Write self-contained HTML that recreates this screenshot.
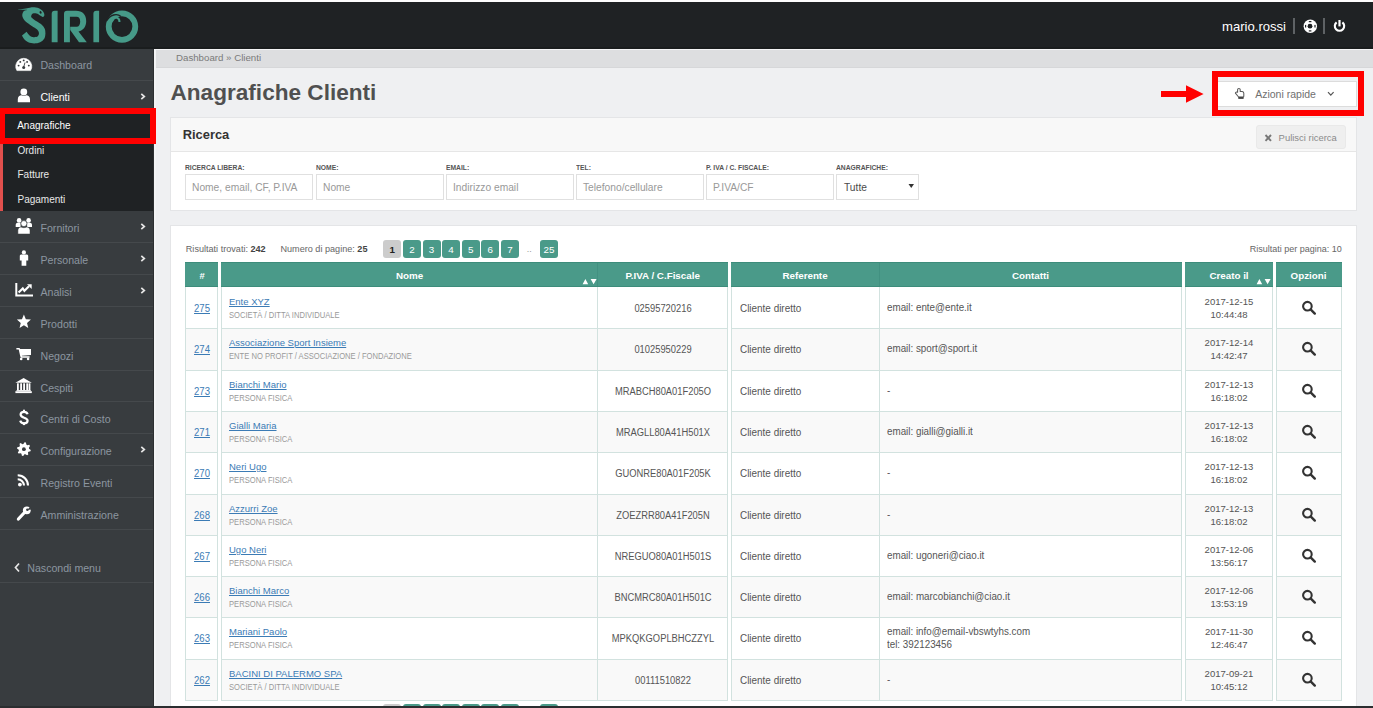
<!DOCTYPE html>
<html><head><meta charset="utf-8"><title>Anagrafiche Clienti</title>
<style>
html,body{margin:0;padding:0;}
body{width:1373px;height:708px;overflow:hidden;position:relative;background:#eff0f2;font-family:"Liberation Sans", sans-serif;}
.t{position:absolute;white-space:nowrap;font-family:"Liberation Sans", sans-serif;}
.r{position:absolute;box-sizing:border-box;}
svg{position:absolute;overflow:visible;}
a{color:inherit;}
u{text-decoration:underline;text-decoration-thickness:1px;text-underline-offset:1px;}
</style></head><body>

<div class="r" style="left:0px;top:0px;width:1373px;height:2px;background:#fdfdfd"></div>
<div class="r" style="left:0px;top:2px;width:1373px;height:47px;background:#1f2224"></div>
<div class="r" style="left:0px;top:47px;width:1373px;height:2px;background:#1a1d1e"></div>
<svg style="left:0;top:0" width="160" height="49" viewBox="0 0 160 49">
<path d="M17.56 9.93 C19.34 9.62 25.67 8.48 28.24 8.04 C30.82 7.59 31.21 7.22 32.99 7.26 C34.77 7.30 37.24 7.58 38.93 8.27 C40.61 8.97 42.17 10.30 43.08 11.42 C43.99 12.54 44.37 14.04 44.39 14.98 C44.41 15.92 43.40 16.71 43.20 17.06 C42.68 16.78 41.22 15.99 40.11 15.39 C39.00 14.80 37.74 13.83 36.55 13.50 C35.36 13.16 33.86 13.06 32.99 13.38 C32.12 13.69 31.53 14.66 31.33 15.39 C31.13 16.13 30.93 16.78 31.80 17.77 C32.67 18.76 34.89 20.16 36.55 21.33 C38.21 22.50 40.39 23.51 41.77 24.77 C43.16 26.04 44.25 27.44 44.86 28.93 C45.47 30.41 45.36 32.88 45.45 33.67 C45.28 34.46 45.28 36.99 44.39 38.42 C43.50 39.86 41.81 41.44 40.11 42.28 C38.41 43.12 36.16 43.47 34.18 43.47 C32.20 43.47 29.92 43.02 28.24 42.28 C26.56 41.54 25.13 40.15 24.09 39.01 C23.05 37.88 22.36 36.05 22.01 35.45 L26.58 31.77 C27.08 32.39 28.38 34.54 29.55 35.45 C30.72 36.36 32.22 37.09 33.58 37.23 C34.95 37.38 36.85 37.04 37.74 36.34 C38.63 35.65 39.02 34.22 38.93 33.08 C38.83 31.94 38.33 30.71 37.15 29.52 C35.96 28.33 33.68 27.24 31.80 25.96 C29.92 24.67 27.35 23.19 25.87 21.80 C24.39 20.42 23.50 18.89 22.90 17.65 C22.31 16.41 22.21 15.42 22.31 14.39 C22.41 13.35 22.75 12.18 23.50 11.42 C24.24 10.66 27.75 10.06 26.76 9.82 C25.77 9.57 19.09 9.91 17.56 9.93 Z" fill="#469a88"/>
<ellipse cx="40.6" cy="12.4" rx="1" ry="1.3" fill="#1f2224" transform="rotate(-30 40.6 12.4)"/>
<path d="M51.7 13.8 Q51.7 10.8 54.7 10.8 L57.6 10.8 L57.6 42.3 L51.7 42.3 Z" fill="#469a88"/>
<path d="M64 13.8 Q64 10.8 67 10.8 L76 10.8 C82.5 10.8 86.2 14.8 86.2 21.2 C86.2 26.8 83 30.5 78.5 31.6 L86.8 42.3 L79 42.3 L70.2 30 L70.2 26.8 L76.5 26.8 C79 26.8 80.2 24.5 80.2 21.5 C80.2 18.5 79 16.7 76.5 16.7 L69.9 16.7 L69.9 42.3 L64 42.3 Z" fill="#469a88"/>
<path d="M93.4 13.8 Q93.4 10.8 96.4 10.8 L99.1 10.8 L99.1 42.3 L93.4 42.3 Z" fill="#469a88"/>
<circle cx="122" cy="26.6" r="13.3" fill="none" stroke="#469a88" stroke-width="5.8"/>
<path d="M106.5 21 C110 14.5 117 13 121 16.5" fill="none" stroke="#1f2224" stroke-width="1.3"/>
<path d="M112 19.5 C115 16.5 119.5 17 119.5 22" fill="none" stroke="#469a88" stroke-width="2"/>
</svg>
<div class="t" style="left:1222.00px;top:19.71px;font-size:13.1px;line-height:13.1px;color:#ffffff;font-weight:400;">mario.rossi</div>
<div class="r" style="left:1293px;top:18px;width:2px;height:16px;background:#5e6265"></div>
<svg style="left:1300px;top:16px" width="20" height="20" viewBox="1300 16 20 20">
<circle cx="1310.3" cy="26.3" r="6.7" fill="#fff"/>
<circle cx="1310" cy="26.2" r="2.4" fill="#1f2224"/>
<g fill="#1f2224"><rect x="1308.8" y="21" width="2.6" height="1.2"/><rect x="1308.8" y="30.3" width="2.6" height="1.2"/><rect x="1305" y="24.9" width="1.2" height="2.6"/><rect x="1314.4" y="24.9" width="1.2" height="2.6"/></g>
</svg>
<div class="r" style="left:1323px;top:18px;width:2px;height:16px;background:#5e6265"></div>
<svg style="left:1330px;top:16px" width="20" height="20" viewBox="1330 16 20 20">
<path d="M1336.6 22.3 A4.7 4.7 0 1 0 1342.4 22.3" fill="none" stroke="#fff" stroke-width="2.1"/>
<line x1="1339.5" y1="20" x2="1339.5" y2="26.4" stroke="#fff" stroke-width="2.2"/>
</svg>
<div class="r" style="left:0px;top:49px;width:153px;height:657px;background:#383c3f"></div>
<div class="r" style="left:153px;top:49px;width:1px;height:657px;background:#2c2f31"></div>
<div class="r" style="left:154px;top:49px;width:2px;height:657px;background:#f3f4f5"></div>
<div class="r" style="left:0px;top:80px;width:153px;height:1px;background:#45494c"></div>
<div class="r" style="left:0px;top:242px;width:153px;height:1px;background:#45494c"></div>
<div class="r" style="left:0px;top:274px;width:153px;height:1px;background:#45494c"></div>
<div class="r" style="left:0px;top:306px;width:153px;height:1px;background:#45494c"></div>
<div class="r" style="left:0px;top:338px;width:153px;height:1px;background:#45494c"></div>
<div class="r" style="left:0px;top:370px;width:153px;height:1px;background:#45494c"></div>
<div class="r" style="left:0px;top:401px;width:153px;height:1px;background:#45494c"></div>
<div class="r" style="left:0px;top:433px;width:153px;height:1px;background:#45494c"></div>
<div class="r" style="left:0px;top:465px;width:153px;height:1px;background:#45494c"></div>
<div class="r" style="left:0px;top:497px;width:153px;height:1px;background:#45494c"></div>
<div class="r" style="left:0px;top:529px;width:153px;height:1px;background:#45494c"></div>
<div class="r" style="left:0px;top:582px;width:153px;height:1px;background:#45494c"></div>
<div class="t" style="left:40.40px;top:59.93px;font-size:10.6px;line-height:10.6px;color:#8c96a0;font-weight:400;">Dashboard</div>
<div class="t" style="left:40.40px;top:91.93px;font-size:10.6px;line-height:10.6px;color:#ffffff;font-weight:400;">Clienti</div>
<div class="r" style="left:0px;top:112px;width:153px;height:99px;background:#1f2224"></div>
<div class="r" style="left:0px;top:112px;width:3px;height:99px;background:#e0504d"></div>
<div class="r" style="left:-1px;top:108px;width:157px;height:36px;border:6px solid #ff0000;background:#1f2224"></div>
<div class="t" style="left:17.20px;top:121.13px;font-size:10.0px;line-height:10.0px;color:#ffffff;font-weight:400;">Anagrafiche</div>
<div class="t" style="left:17.50px;top:145.63px;font-size:10.0px;line-height:10.0px;color:#e8e8e8;font-weight:400;">Ordini</div>
<div class="t" style="left:17.50px;top:170.34px;font-size:10.0px;line-height:10.0px;color:#e8e8e8;font-weight:400;">Fatture</div>
<div class="t" style="left:17.50px;top:194.73px;font-size:10.0px;line-height:10.0px;color:#e8e8e8;font-weight:400;">Pagamenti</div>
<div class="t" style="left:40.50px;top:222.63px;font-size:10.6px;line-height:10.6px;color:#8c96a0;font-weight:400;">Fornitori</div>
<svg style="left:139px;top:223px" width="8" height="9" viewBox="0 0 8 9"><path d="M2.3 0.9 L5.3 3.5 L2.3 6.1" fill="none" stroke="#e6e6e6" stroke-width="1.7"/></svg>
<div class="t" style="left:40.50px;top:254.63px;font-size:10.6px;line-height:10.6px;color:#8c96a0;font-weight:400;">Personale</div>
<svg style="left:139px;top:255px" width="8" height="9" viewBox="0 0 8 9"><path d="M2.3 0.9 L5.3 3.5 L2.3 6.1" fill="none" stroke="#e6e6e6" stroke-width="1.7"/></svg>
<div class="t" style="left:40.50px;top:286.63px;font-size:10.6px;line-height:10.6px;color:#8c96a0;font-weight:400;">Analisi</div>
<svg style="left:139px;top:287px" width="8" height="9" viewBox="0 0 8 9"><path d="M2.3 0.9 L5.3 3.5 L2.3 6.1" fill="none" stroke="#e6e6e6" stroke-width="1.7"/></svg>
<div class="t" style="left:40.50px;top:318.63px;font-size:10.6px;line-height:10.6px;color:#8c96a0;font-weight:400;">Prodotti</div>
<div class="t" style="left:40.50px;top:350.63px;font-size:10.6px;line-height:10.6px;color:#8c96a0;font-weight:400;">Negozi</div>
<div class="t" style="left:40.50px;top:382.63px;font-size:10.6px;line-height:10.6px;color:#8c96a0;font-weight:400;">Cespiti</div>
<div class="t" style="left:40.50px;top:413.63px;font-size:10.6px;line-height:10.6px;color:#8c96a0;font-weight:400;">Centri di Costo</div>
<div class="t" style="left:40.50px;top:445.63px;font-size:10.6px;line-height:10.6px;color:#8c96a0;font-weight:400;">Configurazione</div>
<svg style="left:139px;top:446px" width="8" height="9" viewBox="0 0 8 9"><path d="M2.3 0.9 L5.3 3.5 L2.3 6.1" fill="none" stroke="#e6e6e6" stroke-width="1.7"/></svg>
<div class="t" style="left:40.50px;top:477.63px;font-size:10.6px;line-height:10.6px;color:#8c96a0;font-weight:400;">Registro Eventi</div>
<div class="t" style="left:40.50px;top:509.63px;font-size:10.6px;line-height:10.6px;color:#8c96a0;font-weight:400;">Amministrazione</div>
<svg style="left:139px;top:93px" width="8" height="9" viewBox="0 0 8 9"><path d="M2.3 0.9 L5.3 3.5 L2.3 6.1" fill="none" stroke="#e6e6e6" stroke-width="1.7"/></svg>
<svg style="left:0;top:0" width="153" height="600" viewBox="0 0 153 600">
<!-- dashboard gauge -->
<path d="M16.9 70.6 A8.05 8.05 0 1 1 30.6 70.6 Z" fill="#ffffff" stroke="#ffffff" stroke-width="0.6" stroke-linejoin="round"/>
<g fill="#383c3f"><circle cx="18.6" cy="65.6" r="0.95"/><circle cx="20.3" cy="61.9" r="0.95"/><circle cx="23.7" cy="60.4" r="0.95"/><circle cx="27.1" cy="61.9" r="0.95"/><circle cx="28.8" cy="65.6" r="0.95"/><circle cx="23.7" cy="67.4" r="1.5"/></g>
<line x1="23.7" y1="67" x2="25" y2="62.5" stroke="#383c3f" stroke-width="0.9"/>
<!-- user -->
<circle cx="23.8" cy="92" r="3.4" fill="#ffffff"/>
<path d="M17.8 102.3 L17.8 99.2 C17.8 96.6 19.6 95.4 21.4 95.3 C22.8 96.3 24.8 96.3 26.2 95.3 C28.2 95.4 30 96.6 30 99.2 L30 102.3 Z" fill="#ffffff"/>
<!-- users -->
<circle cx="19.1" cy="220.4" r="2.3" fill="#ffffff"/><circle cx="28.6" cy="220.4" r="2.3" fill="#ffffff"/>
<path d="M15.7 227 L15.7 225 C15.7 223.5 16.6 222.8 17.8 222.8 L20.6 222.8 L20.6 227 Z" fill="#ffffff"/>
<path d="M32 227 L32 225 C32 223.5 31.1 222.8 29.9 222.8 L27.1 222.8 L27.1 227 Z" fill="#ffffff"/>
<circle cx="23.9" cy="223.6" r="3" fill="#ffffff" stroke="#383c3f" stroke-width="0.6"/>
<path d="M17.9 234 L17.9 230.5 C17.9 228.2 19.3 227.1 21 227 C22.6 227.9 25.2 227.9 26.8 227 C28.6 227.1 30 228.2 30 230.5 L30 234 Z" fill="#ffffff" stroke="#383c3f" stroke-width="0.5"/>
<!-- male -->
<circle cx="23.9" cy="252.4" r="2.1" fill="#ffffff"/>
<path d="M19.8 260.6 L19.8 256 C19.8 255 20.6 254.5 21.4 254.5 L26.5 254.5 C27.4 254.5 28.2 255 28.2 256 L28.2 260.6 L26.3 260.6 L26.3 265.7 L21.6 265.7 L21.6 260.6 Z" fill="#ffffff"/>
<!-- chart -->
<path d="M15.3 283 L17.3 283 L17.3 294.4 L33 294.4 L33 296.4 L15.3 296.4 Z" fill="#ffffff"/>
<path d="M18.6 292.6 L22.8 288.4 L24.4 290.8 L29 286.3" fill="none" stroke="#ffffff" stroke-width="2.1"/>
<path d="M27 284.2 L31.7 284.2 L31.7 288.9 Z" fill="#ffffff"/>
<!-- star -->
<polygon points="23.90,314.50 25.84,319.23 30.94,319.61 27.04,322.92 28.25,327.89 23.90,325.20 19.55,327.89 20.76,322.92 16.86,319.61 21.96,319.23" fill="#ffffff"/>
<!-- cart -->
<path d="M16.4 348 L19.4 348 L20.2 349 L31 349 L31 355 L21.8 355.8 L22.2 356.3 L29.6 356.3 L29.6 357.7 L21.4 357.7 L20.3 356.4 L18.7 349.5 L16.4 349.5 Z" fill="#ffffff"/>
<circle cx="21.2" cy="358.9" r="1.3" fill="#ffffff"/><circle cx="28.1" cy="358.9" r="1.3" fill="#ffffff"/>
<!-- bank -->
<path d="M15.4 382.8 L23.6 378 L31.8 382.8 Z" fill="#ffffff"/>
<g fill="#ffffff"><rect x="17" y="383.3" width="1.8" height="6.8"/><rect x="20.2" y="383.3" width="1.8" height="6.8"/><rect x="23.2" y="383.3" width="1.8" height="6.8"/><rect x="26.3" y="383.3" width="1.8" height="6.8"/><rect x="28.6" y="383.3" width="1.8" height="6.8"/></g>
<rect x="16.5" y="390.1" width="14.3" height="1" fill="#ffffff"/>
<rect x="15.4" y="391.2" width="16.4" height="1.9" fill="#ffffff"/>
<!-- dollar -->
<path d="M27.6 414.3 C27 412.3 25.6 411.8 24 411.8 C21.8 411.8 20.6 413 20.6 414.6 C20.6 418.6 27.6 416.8 27.6 420.8 C27.6 422.5 26.2 423.3 24 423.3 C22 423.3 20.8 422.6 20.2 420.6" fill="none" stroke="#ffffff" stroke-width="2.2"/>
<rect x="23" y="409.7" width="2" height="2.6" fill="#ffffff"/><rect x="23" y="422.6" width="2" height="2.5" fill="#ffffff"/>
<!-- gear -->
<polygon points="29.07,448.69 30.77,449.88 30.50,451.20 28.49,451.65 27.92,452.50 28.28,454.53 27.15,455.29 25.41,454.18 24.41,454.37 23.22,456.07 21.90,455.80 21.45,453.79 20.60,453.22 18.57,453.58 17.81,452.45 18.92,450.71 18.73,449.71 17.03,448.52 17.30,447.20 19.31,446.75 19.88,445.90 19.52,443.87 20.65,443.11 22.39,444.22 23.39,444.03 24.58,442.33 25.90,442.60 26.35,444.61 27.20,445.18 29.23,444.82 29.99,445.95 28.88,447.69" fill="#ffffff"/>
<circle cx="23.9" cy="449.2" r="1.9" fill="#383c3f"/>
<!-- rss -->
<circle cx="19.9" cy="484.6" r="1.9" fill="#ffffff"/>
<path d="M17.7 479.3 A6.3 6.3 0 0 1 24 485.6" fill="none" stroke="#ffffff" stroke-width="2.1"/>
<path d="M17.7 475.3 A10.3 10.3 0 0 1 28 485.6" fill="none" stroke="#ffffff" stroke-width="2.1"/>
<!-- wrench -->
<line x1="18.4" y1="519" x2="24" y2="513" stroke="#ffffff" stroke-width="3.2" stroke-linecap="round"/>
<circle cx="26.8" cy="510.3" r="3.9" fill="#ffffff"/>
<path d="M27.2 509.9 L30 507 L31.5 509.5 Z" fill="#383c3f"/>
<circle cx="27.4" cy="509.7" r="1.3" fill="#383c3f"/>
</svg>
<svg style="left:13px;top:562px" width="9" height="11" viewBox="0 0 9 11"><path d="M6 1.5 L2.5 5.5 L6 9.5" fill="none" stroke="#e6e6e6" stroke-width="1.7"/></svg>
<div class="t" style="left:27.30px;top:562.83px;font-size:10.6px;line-height:10.6px;color:#8c96a0;font-weight:400;">Nascondi menu</div>
<div class="r" style="left:156px;top:49px;width:1217px;height:1px;background:#f4f5f6"></div>
<div class="r" style="left:156px;top:50px;width:1217px;height:17px;background:#dddee0"></div>
<div class="r" style="left:156px;top:67px;width:1217px;height:1px;background:#d6d7d9"></div>
<div class="t" style="left:176.00px;top:52.79px;font-size:9.7px;line-height:9.7px;color:#7a7a7a;font-weight:400;">Dashboard » Clienti</div>
<div class="t" style="left:170.50px;top:82.07px;font-size:22.6px;line-height:22.6px;color:#505050;font-weight:700;">Anagrafiche Clienti</div>
<svg style="left:1160px;top:84px" width="46" height="20" viewBox="0 0 46 20"><rect x="1" y="7" width="26" height="6" fill="#ff0000"/><path d="M26 1.3 L43.6 10 L26 18.7 Z" fill="#ff0000"/></svg>
<div class="r" style="left:1217px;top:81px;width:140px;height:26px;background:#ffffff;border:1px solid #dcdcdc"></div>
<div class="r" style="left:1212px;top:71px;width:152px;height:45px;border:6px solid #ff0000"></div>
<svg style="left:1230px;top:84px" width="20" height="20" viewBox="1230 84 20 20"><path d="M1235.4 93.2 C1235.2 92.3 1236.6 91.6 1237.6 92.3 L1237.6 89.6 C1237.6 88 1240.2 88 1240.2 89.6 L1240.2 91.5 L1242.3 91.6 C1243.3 91.8 1243.8 92.3 1243.8 93.2 L1243.8 96.2 C1243.8 96.6 1243.5 97 1243 97 L1238.6 97 Z" fill="#fff" stroke="#5a5a5a" stroke-width="1.05" stroke-linejoin="round"/><rect x="1238.3" y="96.9" width="5.3" height="2" fill="#444"/></svg>
<div class="t" style="left:1255.20px;top:88.51px;font-size:10.5px;line-height:10.5px;color:#707070;font-weight:400;">Azioni rapide</div>
<svg style="left:1327px;top:91px" width="8" height="6" viewBox="0 0 8 6"><path d="M1 1.2 L3.8 4.2 L6.6 1.2" fill="none" stroke="#555" stroke-width="1.2"/></svg>
<div class="r" style="left:170px;top:117px;width:1187px;height:94px;background:#ffffff;border:1px solid #e4e5e7"></div>
<div class="r" style="left:171px;top:118px;width:1185px;height:34px;background:#f8f8f8;border-bottom:1px solid #e6e6e6"></div>
<div class="t" style="left:182.70px;top:129.38px;font-size:12.9px;line-height:12.9px;color:#333;font-weight:700;">Ricerca</div>
<div class="r" style="left:1256px;top:125px;width:90px;height:24px;background:#efefef;border:1px solid #e9e9e9;border-radius:3px"></div>
<svg style="left:1264px;top:134px" width="9" height="8" viewBox="0 0 9 8"><path d="M1.5 1 L7 6.8 M7 1 L1.5 6.8" stroke="#777" stroke-width="1.9"/></svg>
<div class="t" style="left:1278.60px;top:132.70px;font-size:9.45px;line-height:9.45px;color:#8a8a8a;font-weight:400;">Pulisci ricerca</div>
<div class="t" style="left:185.40px;top:164.48px;font-size:7.7px;line-height:7.7px;color:#555;font-weight:700;transform:scaleX(0.875);transform-origin:left top;">RICERCA LIBERA:</div>
<div class="r" style="left:185px;top:174px;width:128px;height:26px;background:#fff;border:1px solid #e0e0e0"></div>
<div class="t" style="left:192.00px;top:183.03px;font-size:10.24px;line-height:10.24px;color:#999;font-weight:400;">Nome, email, CF, P.IVA</div>
<div class="t" style="left:316.40px;top:164.48px;font-size:7.7px;line-height:7.7px;color:#555;font-weight:700;transform:scaleX(0.875);transform-origin:left top;">NOME:</div>
<div class="r" style="left:316px;top:174px;width:128px;height:26px;background:#fff;border:1px solid #e0e0e0"></div>
<div class="t" style="left:323.00px;top:183.03px;font-size:10.24px;line-height:10.24px;color:#999;font-weight:400;">Nome</div>
<div class="t" style="left:446.40px;top:164.48px;font-size:7.7px;line-height:7.7px;color:#555;font-weight:700;transform:scaleX(0.875);transform-origin:left top;">EMAIL:</div>
<div class="r" style="left:446px;top:174px;width:128px;height:26px;background:#fff;border:1px solid #e0e0e0"></div>
<div class="t" style="left:453.00px;top:183.03px;font-size:10.24px;line-height:10.24px;color:#999;font-weight:400;">Indirizzo email</div>
<div class="t" style="left:576.40px;top:164.48px;font-size:7.7px;line-height:7.7px;color:#555;font-weight:700;transform:scaleX(0.875);transform-origin:left top;">TEL:</div>
<div class="r" style="left:576px;top:174px;width:128px;height:26px;background:#fff;border:1px solid #e0e0e0"></div>
<div class="t" style="left:583.00px;top:183.03px;font-size:10.24px;line-height:10.24px;color:#999;font-weight:400;">Telefono/cellulare</div>
<div class="t" style="left:706.40px;top:164.48px;font-size:7.7px;line-height:7.7px;color:#555;font-weight:700;transform:scaleX(0.875);transform-origin:left top;">P. IVA / C. FISCALE:</div>
<div class="r" style="left:706px;top:174px;width:128px;height:26px;background:#fff;border:1px solid #e0e0e0"></div>
<div class="t" style="left:713.00px;top:183.03px;font-size:10.24px;line-height:10.24px;color:#999;font-weight:400;">P.IVA/CF</div>
<div class="t" style="left:836.40px;top:164.48px;font-size:7.7px;line-height:7.7px;color:#555;font-weight:700;transform:scaleX(0.875);transform-origin:left top;">ANAGRAFICHE:</div>
<div class="r" style="left:836px;top:174px;width:83px;height:26px;background:#fff;border:1px solid #e0e0e0"></div>
<div class="t" style="left:844.00px;top:182.73px;font-size:10.24px;line-height:10.24px;color:#4a4a4a;font-weight:400;">Tutte</div>
<svg style="left:908px;top:183px" width="7" height="6" viewBox="0 0 7 6"><path d="M0.5 1 L6 1 L3.25 5 Z" fill="#333"/></svg>
<div class="r" style="left:170px;top:225px;width:1187px;height:490px;background:#ffffff;border:1px solid #e4e5e7"></div>
<div class="t" style="left:185.80px;top:244.80px;font-size:9.1px;line-height:9.1px;color:#666;font-weight:400;">Risultati trovati: <b style="color:#444">242</b></div>
<div class="t" style="left:280.50px;top:244.80px;font-size:9.1px;line-height:9.1px;color:#666;font-weight:400;">Numero di pagine: <b style="color:#444">25</b></div>
<div class="r" style="left:383.3px;top:240px;width:18px;height:18px;background:#cccccc;border-radius:3px"></div>
<div class="t" style="left:92.30px;width:600px;text-align:center;top:244.90px;font-size:9.8px;line-height:9.8px;color:#222;font-weight:700;">1</div>
<div class="r" style="left:403px;top:240px;width:18px;height:18px;background:#4a9a89;border-radius:3px"></div>
<div class="t" style="left:112.00px;width:600px;text-align:center;top:244.90px;font-size:9.8px;line-height:9.8px;color:#fff;font-weight:400;">2</div>
<div class="r" style="left:422.5px;top:240px;width:18px;height:18px;background:#4a9a89;border-radius:3px"></div>
<div class="t" style="left:131.50px;width:600px;text-align:center;top:244.90px;font-size:9.8px;line-height:9.8px;color:#fff;font-weight:400;">3</div>
<div class="r" style="left:442.1px;top:240px;width:18px;height:18px;background:#4a9a89;border-radius:3px"></div>
<div class="t" style="left:151.10px;width:600px;text-align:center;top:244.90px;font-size:9.8px;line-height:9.8px;color:#fff;font-weight:400;">4</div>
<div class="r" style="left:461.8px;top:240px;width:18px;height:18px;background:#4a9a89;border-radius:3px"></div>
<div class="t" style="left:170.80px;width:600px;text-align:center;top:244.90px;font-size:9.8px;line-height:9.8px;color:#fff;font-weight:400;">5</div>
<div class="r" style="left:481.3px;top:240px;width:18px;height:18px;background:#4a9a89;border-radius:3px"></div>
<div class="t" style="left:190.30px;width:600px;text-align:center;top:244.90px;font-size:9.8px;line-height:9.8px;color:#fff;font-weight:400;">6</div>
<div class="r" style="left:500.9px;top:240px;width:18px;height:18px;background:#4a9a89;border-radius:3px"></div>
<div class="t" style="left:209.90px;width:600px;text-align:center;top:244.90px;font-size:9.8px;line-height:9.8px;color:#fff;font-weight:400;">7</div>
<div class="r" style="left:540px;top:240px;width:18px;height:18px;background:#4a9a89;border-radius:3px"></div>
<div class="t" style="left:249.00px;width:600px;text-align:center;top:244.90px;font-size:9.8px;line-height:9.8px;color:#fff;font-weight:400;">25</div>
<div class="t" style="left:229.30px;width:600px;text-align:center;top:244.88px;font-size:9px;line-height:9px;color:#999;font-weight:400;">..</div>
<div class="t" style="left:741.80px;width:600px;text-align:right;top:244.78px;font-size:9.0px;line-height:9.0px;color:#666;font-weight:400;">Risultati per pagina: 10</div>
<div class="r" style="left:185px;top:262px;width:33px;height:25px;background:#4a9a89;border-top:1px solid #3d8c7b;border-bottom:1px solid #3d8c7b"></div>
<div class="r" style="left:221px;top:262px;width:507px;height:25px;background:#4a9a89;border-top:1px solid #3d8c7b;border-bottom:1px solid #3d8c7b"></div>
<div class="r" style="left:731px;top:262px;width:451px;height:25px;background:#4a9a89;border-top:1px solid #3d8c7b;border-bottom:1px solid #3d8c7b"></div>
<div class="r" style="left:1185px;top:262px;width:88px;height:25px;background:#4a9a89;border-top:1px solid #3d8c7b;border-bottom:1px solid #3d8c7b"></div>
<div class="r" style="left:1276px;top:262px;width:66px;height:25px;background:#4a9a89;border-top:1px solid #3d8c7b;border-bottom:1px solid #3d8c7b"></div>
<div class="r" style="left:597px;top:263px;width:1px;height:23px;background:#3d8c7b;opacity:0.6"></div>
<div class="r" style="left:879px;top:263px;width:1px;height:23px;background:#3d8c7b;opacity:0.6"></div>
<div class="t" style="left:-97.90px;width:600px;text-align:center;top:271.04px;font-size:9.4px;line-height:9.4px;color:#fff;font-weight:700;">#</div>
<div class="t" style="left:109.50px;width:600px;text-align:center;top:271.00px;font-size:9.8px;line-height:9.8px;color:#fff;font-weight:700;">Nome</div>
<div class="t" style="left:362.70px;width:600px;text-align:center;top:271.00px;font-size:9.8px;line-height:9.8px;color:#fff;font-weight:700;">P.IVA / C.Fiscale</div>
<div class="t" style="left:505.00px;width:600px;text-align:center;top:271.00px;font-size:9.8px;line-height:9.8px;color:#fff;font-weight:700;">Referente</div>
<div class="t" style="left:730.50px;width:600px;text-align:center;top:271.00px;font-size:9.8px;line-height:9.8px;color:#fff;font-weight:700;">Contatti</div>
<div class="t" style="left:929.00px;width:600px;text-align:center;top:271.00px;font-size:9.8px;line-height:9.8px;color:#fff;font-weight:700;">Creato il</div>
<div class="t" style="left:1008.50px;width:600px;text-align:center;top:271.00px;font-size:9.8px;line-height:9.8px;color:#fff;font-weight:700;">Opzioni</div>
<svg style="left:581.5px;top:279px" width="16" height="7" viewBox="0 0 16 7"><path d="M0.6 5.3 L3.4 0.1 L6.2 5.3 Z M8.6 0.1 L14.6 0.1 L11.6 5.3 Z" fill="#fff"/></svg>
<svg style="left:1256px;top:279px" width="16" height="7" viewBox="0 0 16 7"><path d="M0.6 5.3 L3.4 0.1 L6.2 5.3 Z M8.6 0.1 L14.6 0.1 L11.6 5.3 Z" fill="#fff"/></svg>
<div class="r" style="left:185px;top:287px;width:33px;height:41px;background:#ffffff"></div>
<div class="r" style="left:221px;top:287px;width:507px;height:41px;background:#ffffff"></div>
<div class="r" style="left:731px;top:287px;width:451px;height:41px;background:#ffffff"></div>
<div class="r" style="left:1185px;top:287px;width:88px;height:41px;background:#ffffff"></div>
<div class="r" style="left:1276px;top:287px;width:66px;height:41px;background:#ffffff"></div>
<div class="t" style="left:-98.00px;width:600px;text-align:center;top:303.60px;font-size:10.4px;line-height:10.4px;color:#3b7bb5;font-weight:400;transform:scaleX(0.92);transform-origin:center top;"><u>275</u></div>
<div class="t" style="left:229.00px;top:296.96px;font-size:9.5px;line-height:9.5px;color:#3b7bb5;font-weight:400;"><u>Ente XYZ</u></div>
<div class="t" style="left:229.00px;top:311.12px;font-size:8.6px;line-height:8.6px;color:#999;font-weight:400;transform:scaleX(0.885);transform-origin:left top;">SOCIETÀ / DITTA INDIVIDUALE</div>
<div class="t" style="left:362.70px;width:600px;text-align:center;top:303.64px;font-size:10.0px;line-height:10.0px;color:#555;font-weight:400;transform:scaleX(0.935);transform-origin:center top;">02595720216</div>
<div class="t" style="left:739.50px;top:303.21px;font-size:10.5px;line-height:10.5px;color:#555;font-weight:400;transform:scaleX(0.945);transform-origin:left top;">Cliente diretto</div>
<div class="t" style="left:887.00px;top:303.30px;font-size:10.4px;line-height:10.4px;color:#555;font-weight:400;transform:scaleX(0.945);transform-origin:left top;">email: ente@ente.it</div>
<div class="t" style="left:929.00px;width:600px;text-align:center;top:297.02px;font-size:9.9px;line-height:9.9px;color:#555;font-weight:400;transform:scaleX(0.965);transform-origin:center top;">2017-12-15</div>
<div class="t" style="left:929.00px;width:600px;text-align:center;top:310.22px;font-size:9.9px;line-height:9.9px;color:#555;font-weight:400;transform:scaleX(0.965);transform-origin:center top;">10:44:48</div>
<svg style="left:1301px;top:299.6px" width="16" height="16" viewBox="0 0 16 16"><circle cx="6.4" cy="6.2" r="4.3" fill="none" stroke="#333" stroke-width="2.1"/><line x1="9.6" y1="9.4" x2="13.8" y2="13.6" stroke="#333" stroke-width="2.4" stroke-linecap="round"/></svg>
<div class="r" style="left:185px;top:328px;width:33px;height:42px;background:#f9f9f9"></div>
<div class="r" style="left:221px;top:328px;width:507px;height:42px;background:#f9f9f9"></div>
<div class="r" style="left:731px;top:328px;width:451px;height:42px;background:#f9f9f9"></div>
<div class="r" style="left:1185px;top:328px;width:88px;height:42px;background:#f9f9f9"></div>
<div class="r" style="left:1276px;top:328px;width:66px;height:42px;background:#f9f9f9"></div>
<div class="t" style="left:-98.00px;width:600px;text-align:center;top:344.60px;font-size:10.4px;line-height:10.4px;color:#3b7bb5;font-weight:400;transform:scaleX(0.92);transform-origin:center top;"><u>274</u></div>
<div class="t" style="left:229.00px;top:337.96px;font-size:9.5px;line-height:9.5px;color:#3b7bb5;font-weight:400;"><u>Associazione Sport Insieme</u></div>
<div class="t" style="left:229.00px;top:352.12px;font-size:8.6px;line-height:8.6px;color:#999;font-weight:400;transform:scaleX(0.885);transform-origin:left top;">ENTE NO PROFIT / ASSOCIAZIONE / FONDAZIONE</div>
<div class="t" style="left:362.70px;width:600px;text-align:center;top:344.64px;font-size:10.0px;line-height:10.0px;color:#555;font-weight:400;transform:scaleX(0.935);transform-origin:center top;">01025950229</div>
<div class="t" style="left:739.50px;top:344.21px;font-size:10.5px;line-height:10.5px;color:#555;font-weight:400;transform:scaleX(0.945);transform-origin:left top;">Cliente diretto</div>
<div class="t" style="left:887.00px;top:344.30px;font-size:10.4px;line-height:10.4px;color:#555;font-weight:400;transform:scaleX(0.945);transform-origin:left top;">email: sport@sport.it</div>
<div class="t" style="left:929.00px;width:600px;text-align:center;top:338.02px;font-size:9.9px;line-height:9.9px;color:#555;font-weight:400;transform:scaleX(0.965);transform-origin:center top;">2017-12-14</div>
<div class="t" style="left:929.00px;width:600px;text-align:center;top:351.22px;font-size:9.9px;line-height:9.9px;color:#555;font-weight:400;transform:scaleX(0.965);transform-origin:center top;">14:42:47</div>
<svg style="left:1301px;top:340.6px" width="16" height="16" viewBox="0 0 16 16"><circle cx="6.4" cy="6.2" r="4.3" fill="none" stroke="#333" stroke-width="2.1"/><line x1="9.6" y1="9.4" x2="13.8" y2="13.6" stroke="#333" stroke-width="2.4" stroke-linecap="round"/></svg>
<div class="r" style="left:185px;top:370px;width:33px;height:41px;background:#ffffff"></div>
<div class="r" style="left:221px;top:370px;width:507px;height:41px;background:#ffffff"></div>
<div class="r" style="left:731px;top:370px;width:451px;height:41px;background:#ffffff"></div>
<div class="r" style="left:1185px;top:370px;width:88px;height:41px;background:#ffffff"></div>
<div class="r" style="left:1276px;top:370px;width:66px;height:41px;background:#ffffff"></div>
<div class="t" style="left:-98.00px;width:600px;text-align:center;top:386.60px;font-size:10.4px;line-height:10.4px;color:#3b7bb5;font-weight:400;transform:scaleX(0.92);transform-origin:center top;"><u>273</u></div>
<div class="t" style="left:229.00px;top:379.96px;font-size:9.5px;line-height:9.5px;color:#3b7bb5;font-weight:400;"><u>Bianchi Mario</u></div>
<div class="t" style="left:229.00px;top:394.12px;font-size:8.6px;line-height:8.6px;color:#999;font-weight:400;transform:scaleX(0.885);transform-origin:left top;">PERSONA FISICA</div>
<div class="t" style="left:362.70px;width:600px;text-align:center;top:386.64px;font-size:10.0px;line-height:10.0px;color:#555;font-weight:400;transform:scaleX(0.935);transform-origin:center top;">MRABCH80A01F205O</div>
<div class="t" style="left:739.50px;top:386.21px;font-size:10.5px;line-height:10.5px;color:#555;font-weight:400;transform:scaleX(0.945);transform-origin:left top;">Cliente diretto</div>
<div class="t" style="left:887.00px;top:386.30px;font-size:10.4px;line-height:10.4px;color:#555;font-weight:400;transform:scaleX(0.945);transform-origin:left top;">-</div>
<div class="t" style="left:929.00px;width:600px;text-align:center;top:380.02px;font-size:9.9px;line-height:9.9px;color:#555;font-weight:400;transform:scaleX(0.965);transform-origin:center top;">2017-12-13</div>
<div class="t" style="left:929.00px;width:600px;text-align:center;top:393.22px;font-size:9.9px;line-height:9.9px;color:#555;font-weight:400;transform:scaleX(0.965);transform-origin:center top;">16:18:02</div>
<svg style="left:1301px;top:382.6px" width="16" height="16" viewBox="0 0 16 16"><circle cx="6.4" cy="6.2" r="4.3" fill="none" stroke="#333" stroke-width="2.1"/><line x1="9.6" y1="9.4" x2="13.8" y2="13.6" stroke="#333" stroke-width="2.4" stroke-linecap="round"/></svg>
<div class="r" style="left:185px;top:411px;width:33px;height:41px;background:#f9f9f9"></div>
<div class="r" style="left:221px;top:411px;width:507px;height:41px;background:#f9f9f9"></div>
<div class="r" style="left:731px;top:411px;width:451px;height:41px;background:#f9f9f9"></div>
<div class="r" style="left:1185px;top:411px;width:88px;height:41px;background:#f9f9f9"></div>
<div class="r" style="left:1276px;top:411px;width:66px;height:41px;background:#f9f9f9"></div>
<div class="t" style="left:-98.00px;width:600px;text-align:center;top:427.60px;font-size:10.4px;line-height:10.4px;color:#3b7bb5;font-weight:400;transform:scaleX(0.92);transform-origin:center top;"><u>271</u></div>
<div class="t" style="left:229.00px;top:420.96px;font-size:9.5px;line-height:9.5px;color:#3b7bb5;font-weight:400;"><u>Gialli Maria</u></div>
<div class="t" style="left:229.00px;top:435.12px;font-size:8.6px;line-height:8.6px;color:#999;font-weight:400;transform:scaleX(0.885);transform-origin:left top;">PERSONA FISICA</div>
<div class="t" style="left:362.70px;width:600px;text-align:center;top:427.64px;font-size:10.0px;line-height:10.0px;color:#555;font-weight:400;transform:scaleX(0.935);transform-origin:center top;">MRAGLL80A41H501X</div>
<div class="t" style="left:739.50px;top:427.21px;font-size:10.5px;line-height:10.5px;color:#555;font-weight:400;transform:scaleX(0.945);transform-origin:left top;">Cliente diretto</div>
<div class="t" style="left:887.00px;top:427.30px;font-size:10.4px;line-height:10.4px;color:#555;font-weight:400;transform:scaleX(0.945);transform-origin:left top;">email: gialli@gialli.it</div>
<div class="t" style="left:929.00px;width:600px;text-align:center;top:421.02px;font-size:9.9px;line-height:9.9px;color:#555;font-weight:400;transform:scaleX(0.965);transform-origin:center top;">2017-12-13</div>
<div class="t" style="left:929.00px;width:600px;text-align:center;top:434.22px;font-size:9.9px;line-height:9.9px;color:#555;font-weight:400;transform:scaleX(0.965);transform-origin:center top;">16:18:02</div>
<svg style="left:1301px;top:423.6px" width="16" height="16" viewBox="0 0 16 16"><circle cx="6.4" cy="6.2" r="4.3" fill="none" stroke="#333" stroke-width="2.1"/><line x1="9.6" y1="9.4" x2="13.8" y2="13.6" stroke="#333" stroke-width="2.4" stroke-linecap="round"/></svg>
<div class="r" style="left:185px;top:452px;width:33px;height:42px;background:#ffffff"></div>
<div class="r" style="left:221px;top:452px;width:507px;height:42px;background:#ffffff"></div>
<div class="r" style="left:731px;top:452px;width:451px;height:42px;background:#ffffff"></div>
<div class="r" style="left:1185px;top:452px;width:88px;height:42px;background:#ffffff"></div>
<div class="r" style="left:1276px;top:452px;width:66px;height:42px;background:#ffffff"></div>
<div class="t" style="left:-98.00px;width:600px;text-align:center;top:468.60px;font-size:10.4px;line-height:10.4px;color:#3b7bb5;font-weight:400;transform:scaleX(0.92);transform-origin:center top;"><u>270</u></div>
<div class="t" style="left:229.00px;top:461.96px;font-size:9.5px;line-height:9.5px;color:#3b7bb5;font-weight:400;"><u>Neri Ugo</u></div>
<div class="t" style="left:229.00px;top:476.12px;font-size:8.6px;line-height:8.6px;color:#999;font-weight:400;transform:scaleX(0.885);transform-origin:left top;">PERSONA FISICA</div>
<div class="t" style="left:362.70px;width:600px;text-align:center;top:468.64px;font-size:10.0px;line-height:10.0px;color:#555;font-weight:400;transform:scaleX(0.935);transform-origin:center top;">GUONRE80A01F205K</div>
<div class="t" style="left:739.50px;top:468.21px;font-size:10.5px;line-height:10.5px;color:#555;font-weight:400;transform:scaleX(0.945);transform-origin:left top;">Cliente diretto</div>
<div class="t" style="left:887.00px;top:468.30px;font-size:10.4px;line-height:10.4px;color:#555;font-weight:400;transform:scaleX(0.945);transform-origin:left top;">-</div>
<div class="t" style="left:929.00px;width:600px;text-align:center;top:462.02px;font-size:9.9px;line-height:9.9px;color:#555;font-weight:400;transform:scaleX(0.965);transform-origin:center top;">2017-12-13</div>
<div class="t" style="left:929.00px;width:600px;text-align:center;top:475.22px;font-size:9.9px;line-height:9.9px;color:#555;font-weight:400;transform:scaleX(0.965);transform-origin:center top;">16:18:02</div>
<svg style="left:1301px;top:464.6px" width="16" height="16" viewBox="0 0 16 16"><circle cx="6.4" cy="6.2" r="4.3" fill="none" stroke="#333" stroke-width="2.1"/><line x1="9.6" y1="9.4" x2="13.8" y2="13.6" stroke="#333" stroke-width="2.4" stroke-linecap="round"/></svg>
<div class="r" style="left:185px;top:494px;width:33px;height:41px;background:#f9f9f9"></div>
<div class="r" style="left:221px;top:494px;width:507px;height:41px;background:#f9f9f9"></div>
<div class="r" style="left:731px;top:494px;width:451px;height:41px;background:#f9f9f9"></div>
<div class="r" style="left:1185px;top:494px;width:88px;height:41px;background:#f9f9f9"></div>
<div class="r" style="left:1276px;top:494px;width:66px;height:41px;background:#f9f9f9"></div>
<div class="t" style="left:-98.00px;width:600px;text-align:center;top:510.60px;font-size:10.4px;line-height:10.4px;color:#3b7bb5;font-weight:400;transform:scaleX(0.92);transform-origin:center top;"><u>268</u></div>
<div class="t" style="left:229.00px;top:503.96px;font-size:9.5px;line-height:9.5px;color:#3b7bb5;font-weight:400;"><u>Azzurri Zoe</u></div>
<div class="t" style="left:229.00px;top:518.12px;font-size:8.6px;line-height:8.6px;color:#999;font-weight:400;transform:scaleX(0.885);transform-origin:left top;">PERSONA FISICA</div>
<div class="t" style="left:362.70px;width:600px;text-align:center;top:510.64px;font-size:10.0px;line-height:10.0px;color:#555;font-weight:400;transform:scaleX(0.935);transform-origin:center top;">ZOEZRR80A41F205N</div>
<div class="t" style="left:739.50px;top:510.21px;font-size:10.5px;line-height:10.5px;color:#555;font-weight:400;transform:scaleX(0.945);transform-origin:left top;">Cliente diretto</div>
<div class="t" style="left:887.00px;top:510.30px;font-size:10.4px;line-height:10.4px;color:#555;font-weight:400;transform:scaleX(0.945);transform-origin:left top;">-</div>
<div class="t" style="left:929.00px;width:600px;text-align:center;top:504.02px;font-size:9.9px;line-height:9.9px;color:#555;font-weight:400;transform:scaleX(0.965);transform-origin:center top;">2017-12-13</div>
<div class="t" style="left:929.00px;width:600px;text-align:center;top:517.22px;font-size:9.9px;line-height:9.9px;color:#555;font-weight:400;transform:scaleX(0.965);transform-origin:center top;">16:18:02</div>
<svg style="left:1301px;top:506.6px" width="16" height="16" viewBox="0 0 16 16"><circle cx="6.4" cy="6.2" r="4.3" fill="none" stroke="#333" stroke-width="2.1"/><line x1="9.6" y1="9.4" x2="13.8" y2="13.6" stroke="#333" stroke-width="2.4" stroke-linecap="round"/></svg>
<div class="r" style="left:185px;top:535px;width:33px;height:41px;background:#ffffff"></div>
<div class="r" style="left:221px;top:535px;width:507px;height:41px;background:#ffffff"></div>
<div class="r" style="left:731px;top:535px;width:451px;height:41px;background:#ffffff"></div>
<div class="r" style="left:1185px;top:535px;width:88px;height:41px;background:#ffffff"></div>
<div class="r" style="left:1276px;top:535px;width:66px;height:41px;background:#ffffff"></div>
<div class="t" style="left:-98.00px;width:600px;text-align:center;top:551.60px;font-size:10.4px;line-height:10.4px;color:#3b7bb5;font-weight:400;transform:scaleX(0.92);transform-origin:center top;"><u>267</u></div>
<div class="t" style="left:229.00px;top:544.96px;font-size:9.5px;line-height:9.5px;color:#3b7bb5;font-weight:400;"><u>Ugo Neri</u></div>
<div class="t" style="left:229.00px;top:559.12px;font-size:8.6px;line-height:8.6px;color:#999;font-weight:400;transform:scaleX(0.885);transform-origin:left top;">PERSONA FISICA</div>
<div class="t" style="left:362.70px;width:600px;text-align:center;top:551.63px;font-size:10.0px;line-height:10.0px;color:#555;font-weight:400;transform:scaleX(0.935);transform-origin:center top;">NREGUO80A01H501S</div>
<div class="t" style="left:739.50px;top:551.21px;font-size:10.5px;line-height:10.5px;color:#555;font-weight:400;transform:scaleX(0.945);transform-origin:left top;">Cliente diretto</div>
<div class="t" style="left:887.00px;top:551.30px;font-size:10.4px;line-height:10.4px;color:#555;font-weight:400;transform:scaleX(0.945);transform-origin:left top;">email: ugoneri@ciao.it</div>
<div class="t" style="left:929.00px;width:600px;text-align:center;top:545.02px;font-size:9.9px;line-height:9.9px;color:#555;font-weight:400;transform:scaleX(0.965);transform-origin:center top;">2017-12-06</div>
<div class="t" style="left:929.00px;width:600px;text-align:center;top:558.22px;font-size:9.9px;line-height:9.9px;color:#555;font-weight:400;transform:scaleX(0.965);transform-origin:center top;">13:56:17</div>
<svg style="left:1301px;top:547.6px" width="16" height="16" viewBox="0 0 16 16"><circle cx="6.4" cy="6.2" r="4.3" fill="none" stroke="#333" stroke-width="2.1"/><line x1="9.6" y1="9.4" x2="13.8" y2="13.6" stroke="#333" stroke-width="2.4" stroke-linecap="round"/></svg>
<div class="r" style="left:185px;top:576px;width:33px;height:41px;background:#f9f9f9"></div>
<div class="r" style="left:221px;top:576px;width:507px;height:41px;background:#f9f9f9"></div>
<div class="r" style="left:731px;top:576px;width:451px;height:41px;background:#f9f9f9"></div>
<div class="r" style="left:1185px;top:576px;width:88px;height:41px;background:#f9f9f9"></div>
<div class="r" style="left:1276px;top:576px;width:66px;height:41px;background:#f9f9f9"></div>
<div class="t" style="left:-98.00px;width:600px;text-align:center;top:592.60px;font-size:10.4px;line-height:10.4px;color:#3b7bb5;font-weight:400;transform:scaleX(0.92);transform-origin:center top;"><u>266</u></div>
<div class="t" style="left:229.00px;top:585.96px;font-size:9.5px;line-height:9.5px;color:#3b7bb5;font-weight:400;"><u>Bianchi Marco</u></div>
<div class="t" style="left:229.00px;top:600.12px;font-size:8.6px;line-height:8.6px;color:#999;font-weight:400;transform:scaleX(0.885);transform-origin:left top;">PERSONA FISICA</div>
<div class="t" style="left:362.70px;width:600px;text-align:center;top:592.63px;font-size:10.0px;line-height:10.0px;color:#555;font-weight:400;transform:scaleX(0.935);transform-origin:center top;">BNCMRC80A01H501C</div>
<div class="t" style="left:739.50px;top:592.21px;font-size:10.5px;line-height:10.5px;color:#555;font-weight:400;transform:scaleX(0.945);transform-origin:left top;">Cliente diretto</div>
<div class="t" style="left:887.00px;top:592.30px;font-size:10.4px;line-height:10.4px;color:#555;font-weight:400;transform:scaleX(0.945);transform-origin:left top;">email: marcobianchi@ciao.it</div>
<div class="t" style="left:929.00px;width:600px;text-align:center;top:586.02px;font-size:9.9px;line-height:9.9px;color:#555;font-weight:400;transform:scaleX(0.965);transform-origin:center top;">2017-12-06</div>
<div class="t" style="left:929.00px;width:600px;text-align:center;top:599.22px;font-size:9.9px;line-height:9.9px;color:#555;font-weight:400;transform:scaleX(0.965);transform-origin:center top;">13:53:19</div>
<svg style="left:1301px;top:588.6px" width="16" height="16" viewBox="0 0 16 16"><circle cx="6.4" cy="6.2" r="4.3" fill="none" stroke="#333" stroke-width="2.1"/><line x1="9.6" y1="9.4" x2="13.8" y2="13.6" stroke="#333" stroke-width="2.4" stroke-linecap="round"/></svg>
<div class="r" style="left:185px;top:617px;width:33px;height:42px;background:#ffffff"></div>
<div class="r" style="left:221px;top:617px;width:507px;height:42px;background:#ffffff"></div>
<div class="r" style="left:731px;top:617px;width:451px;height:42px;background:#ffffff"></div>
<div class="r" style="left:1185px;top:617px;width:88px;height:42px;background:#ffffff"></div>
<div class="r" style="left:1276px;top:617px;width:66px;height:42px;background:#ffffff"></div>
<div class="t" style="left:-98.00px;width:600px;text-align:center;top:633.60px;font-size:10.4px;line-height:10.4px;color:#3b7bb5;font-weight:400;transform:scaleX(0.92);transform-origin:center top;"><u>263</u></div>
<div class="t" style="left:229.00px;top:626.96px;font-size:9.5px;line-height:9.5px;color:#3b7bb5;font-weight:400;"><u>Mariani Paolo</u></div>
<div class="t" style="left:229.00px;top:641.12px;font-size:8.6px;line-height:8.6px;color:#999;font-weight:400;transform:scaleX(0.885);transform-origin:left top;">PERSONA FISICA</div>
<div class="t" style="left:362.70px;width:600px;text-align:center;top:633.63px;font-size:10.0px;line-height:10.0px;color:#555;font-weight:400;transform:scaleX(0.935);transform-origin:center top;">MPKQKGOPLBHCZZYL</div>
<div class="t" style="left:739.50px;top:633.21px;font-size:10.5px;line-height:10.5px;color:#555;font-weight:400;transform:scaleX(0.945);transform-origin:left top;">Cliente diretto</div>
<div class="t" style="left:887.00px;top:626.80px;font-size:10.4px;line-height:10.4px;color:#555;font-weight:400;transform:scaleX(0.945);transform-origin:left top;">email: info@email-vbswtyhs.com</div>
<div class="t" style="left:887.00px;top:639.70px;font-size:10.4px;line-height:10.4px;color:#555;font-weight:400;transform:scaleX(0.945);transform-origin:left top;">tel: 392123456</div>
<div class="t" style="left:929.00px;width:600px;text-align:center;top:627.02px;font-size:9.9px;line-height:9.9px;color:#555;font-weight:400;transform:scaleX(0.965);transform-origin:center top;">2017-11-30</div>
<div class="t" style="left:929.00px;width:600px;text-align:center;top:640.22px;font-size:9.9px;line-height:9.9px;color:#555;font-weight:400;transform:scaleX(0.965);transform-origin:center top;">12:46:47</div>
<svg style="left:1301px;top:629.6px" width="16" height="16" viewBox="0 0 16 16"><circle cx="6.4" cy="6.2" r="4.3" fill="none" stroke="#333" stroke-width="2.1"/><line x1="9.6" y1="9.4" x2="13.8" y2="13.6" stroke="#333" stroke-width="2.4" stroke-linecap="round"/></svg>
<div class="r" style="left:185px;top:659px;width:33px;height:41px;background:#f9f9f9"></div>
<div class="r" style="left:221px;top:659px;width:507px;height:41px;background:#f9f9f9"></div>
<div class="r" style="left:731px;top:659px;width:451px;height:41px;background:#f9f9f9"></div>
<div class="r" style="left:1185px;top:659px;width:88px;height:41px;background:#f9f9f9"></div>
<div class="r" style="left:1276px;top:659px;width:66px;height:41px;background:#f9f9f9"></div>
<div class="t" style="left:-98.00px;width:600px;text-align:center;top:675.60px;font-size:10.4px;line-height:10.4px;color:#3b7bb5;font-weight:400;transform:scaleX(0.92);transform-origin:center top;"><u>262</u></div>
<div class="t" style="left:229.00px;top:668.96px;font-size:9.5px;line-height:9.5px;color:#3b7bb5;font-weight:400;"><u>BACINI DI PALERMO SPA</u></div>
<div class="t" style="left:229.00px;top:683.12px;font-size:8.6px;line-height:8.6px;color:#999;font-weight:400;transform:scaleX(0.885);transform-origin:left top;">SOCIETÀ / DITTA INDIVIDUALE</div>
<div class="t" style="left:362.70px;width:600px;text-align:center;top:675.63px;font-size:10.0px;line-height:10.0px;color:#555;font-weight:400;transform:scaleX(0.935);transform-origin:center top;">00111510822</div>
<div class="t" style="left:739.50px;top:675.21px;font-size:10.5px;line-height:10.5px;color:#555;font-weight:400;transform:scaleX(0.945);transform-origin:left top;">Cliente diretto</div>
<div class="t" style="left:887.00px;top:675.30px;font-size:10.4px;line-height:10.4px;color:#555;font-weight:400;transform:scaleX(0.945);transform-origin:left top;">-</div>
<div class="t" style="left:929.00px;width:600px;text-align:center;top:669.02px;font-size:9.9px;line-height:9.9px;color:#555;font-weight:400;transform:scaleX(0.965);transform-origin:center top;">2017-09-21</div>
<div class="t" style="left:929.00px;width:600px;text-align:center;top:682.22px;font-size:9.9px;line-height:9.9px;color:#555;font-weight:400;transform:scaleX(0.965);transform-origin:center top;">10:45:12</div>
<svg style="left:1301px;top:671.6px" width="16" height="16" viewBox="0 0 16 16"><circle cx="6.4" cy="6.2" r="4.3" fill="none" stroke="#333" stroke-width="2.1"/><line x1="9.6" y1="9.4" x2="13.8" y2="13.6" stroke="#333" stroke-width="2.4" stroke-linecap="round"/></svg>
<div class="r" style="left:185px;top:328px;width:33px;height:1px;background:#d2e2df"></div>
<div class="r" style="left:221px;top:328px;width:507px;height:1px;background:#d2e2df"></div>
<div class="r" style="left:731px;top:328px;width:451px;height:1px;background:#d2e2df"></div>
<div class="r" style="left:1185px;top:328px;width:88px;height:1px;background:#d2e2df"></div>
<div class="r" style="left:1276px;top:328px;width:66px;height:1px;background:#d2e2df"></div>
<div class="r" style="left:185px;top:370px;width:33px;height:1px;background:#d2e2df"></div>
<div class="r" style="left:221px;top:370px;width:507px;height:1px;background:#d2e2df"></div>
<div class="r" style="left:731px;top:370px;width:451px;height:1px;background:#d2e2df"></div>
<div class="r" style="left:1185px;top:370px;width:88px;height:1px;background:#d2e2df"></div>
<div class="r" style="left:1276px;top:370px;width:66px;height:1px;background:#d2e2df"></div>
<div class="r" style="left:185px;top:411px;width:33px;height:1px;background:#d2e2df"></div>
<div class="r" style="left:221px;top:411px;width:507px;height:1px;background:#d2e2df"></div>
<div class="r" style="left:731px;top:411px;width:451px;height:1px;background:#d2e2df"></div>
<div class="r" style="left:1185px;top:411px;width:88px;height:1px;background:#d2e2df"></div>
<div class="r" style="left:1276px;top:411px;width:66px;height:1px;background:#d2e2df"></div>
<div class="r" style="left:185px;top:452px;width:33px;height:1px;background:#d2e2df"></div>
<div class="r" style="left:221px;top:452px;width:507px;height:1px;background:#d2e2df"></div>
<div class="r" style="left:731px;top:452px;width:451px;height:1px;background:#d2e2df"></div>
<div class="r" style="left:1185px;top:452px;width:88px;height:1px;background:#d2e2df"></div>
<div class="r" style="left:1276px;top:452px;width:66px;height:1px;background:#d2e2df"></div>
<div class="r" style="left:185px;top:494px;width:33px;height:1px;background:#d2e2df"></div>
<div class="r" style="left:221px;top:494px;width:507px;height:1px;background:#d2e2df"></div>
<div class="r" style="left:731px;top:494px;width:451px;height:1px;background:#d2e2df"></div>
<div class="r" style="left:1185px;top:494px;width:88px;height:1px;background:#d2e2df"></div>
<div class="r" style="left:1276px;top:494px;width:66px;height:1px;background:#d2e2df"></div>
<div class="r" style="left:185px;top:535px;width:33px;height:1px;background:#d2e2df"></div>
<div class="r" style="left:221px;top:535px;width:507px;height:1px;background:#d2e2df"></div>
<div class="r" style="left:731px;top:535px;width:451px;height:1px;background:#d2e2df"></div>
<div class="r" style="left:1185px;top:535px;width:88px;height:1px;background:#d2e2df"></div>
<div class="r" style="left:1276px;top:535px;width:66px;height:1px;background:#d2e2df"></div>
<div class="r" style="left:185px;top:576px;width:33px;height:1px;background:#d2e2df"></div>
<div class="r" style="left:221px;top:576px;width:507px;height:1px;background:#d2e2df"></div>
<div class="r" style="left:731px;top:576px;width:451px;height:1px;background:#d2e2df"></div>
<div class="r" style="left:1185px;top:576px;width:88px;height:1px;background:#d2e2df"></div>
<div class="r" style="left:1276px;top:576px;width:66px;height:1px;background:#d2e2df"></div>
<div class="r" style="left:185px;top:617px;width:33px;height:1px;background:#d2e2df"></div>
<div class="r" style="left:221px;top:617px;width:507px;height:1px;background:#d2e2df"></div>
<div class="r" style="left:731px;top:617px;width:451px;height:1px;background:#d2e2df"></div>
<div class="r" style="left:1185px;top:617px;width:88px;height:1px;background:#d2e2df"></div>
<div class="r" style="left:1276px;top:617px;width:66px;height:1px;background:#d2e2df"></div>
<div class="r" style="left:185px;top:659px;width:33px;height:1px;background:#d2e2df"></div>
<div class="r" style="left:221px;top:659px;width:507px;height:1px;background:#d2e2df"></div>
<div class="r" style="left:731px;top:659px;width:451px;height:1px;background:#d2e2df"></div>
<div class="r" style="left:1185px;top:659px;width:88px;height:1px;background:#d2e2df"></div>
<div class="r" style="left:1276px;top:659px;width:66px;height:1px;background:#d2e2df"></div>
<div class="r" style="left:185px;top:700px;width:33px;height:1px;background:#d2e2df"></div>
<div class="r" style="left:221px;top:700px;width:507px;height:1px;background:#d2e2df"></div>
<div class="r" style="left:731px;top:700px;width:451px;height:1px;background:#d2e2df"></div>
<div class="r" style="left:1185px;top:700px;width:88px;height:1px;background:#d2e2df"></div>
<div class="r" style="left:1276px;top:700px;width:66px;height:1px;background:#d2e2df"></div>
<div class="r" style="left:185px;top:287px;width:1px;height:414px;background:#d2e2df"></div>
<div class="r" style="left:217px;top:287px;width:1px;height:414px;background:#d2e2df"></div>
<div class="r" style="left:221px;top:287px;width:1px;height:414px;background:#d2e2df"></div>
<div class="r" style="left:597px;top:287px;width:1px;height:414px;background:#d2e2df"></div>
<div class="r" style="left:727px;top:287px;width:1px;height:414px;background:#d2e2df"></div>
<div class="r" style="left:731px;top:287px;width:1px;height:414px;background:#d2e2df"></div>
<div class="r" style="left:879px;top:287px;width:1px;height:414px;background:#d2e2df"></div>
<div class="r" style="left:1181px;top:287px;width:1px;height:414px;background:#d2e2df"></div>
<div class="r" style="left:1185px;top:287px;width:1px;height:414px;background:#d2e2df"></div>
<div class="r" style="left:1272px;top:287px;width:1px;height:414px;background:#d2e2df"></div>
<div class="r" style="left:1276px;top:287px;width:1px;height:414px;background:#d2e2df"></div>
<div class="r" style="left:1341px;top:287px;width:1px;height:414px;background:#d2e2df"></div>
<div class="r" style="left:383.3px;top:704px;width:18px;height:18px;background:#cccccc;border-radius:3px"></div>
<div class="r" style="left:403px;top:704px;width:18px;height:18px;background:#4a9a89;border-radius:3px"></div>
<div class="r" style="left:422.5px;top:704px;width:18px;height:18px;background:#4a9a89;border-radius:3px"></div>
<div class="r" style="left:442.1px;top:704px;width:18px;height:18px;background:#4a9a89;border-radius:3px"></div>
<div class="r" style="left:461.8px;top:704px;width:18px;height:18px;background:#4a9a89;border-radius:3px"></div>
<div class="r" style="left:481.3px;top:704px;width:18px;height:18px;background:#4a9a89;border-radius:3px"></div>
<div class="r" style="left:500.9px;top:704px;width:18px;height:18px;background:#4a9a89;border-radius:3px"></div>
<div class="r" style="left:540px;top:704px;width:18px;height:18px;background:#4a9a89;border-radius:3px"></div>
<div class="r" style="left:0px;top:706px;width:1373px;height:2px;background:#2b2e30"></div>
</body></html>
